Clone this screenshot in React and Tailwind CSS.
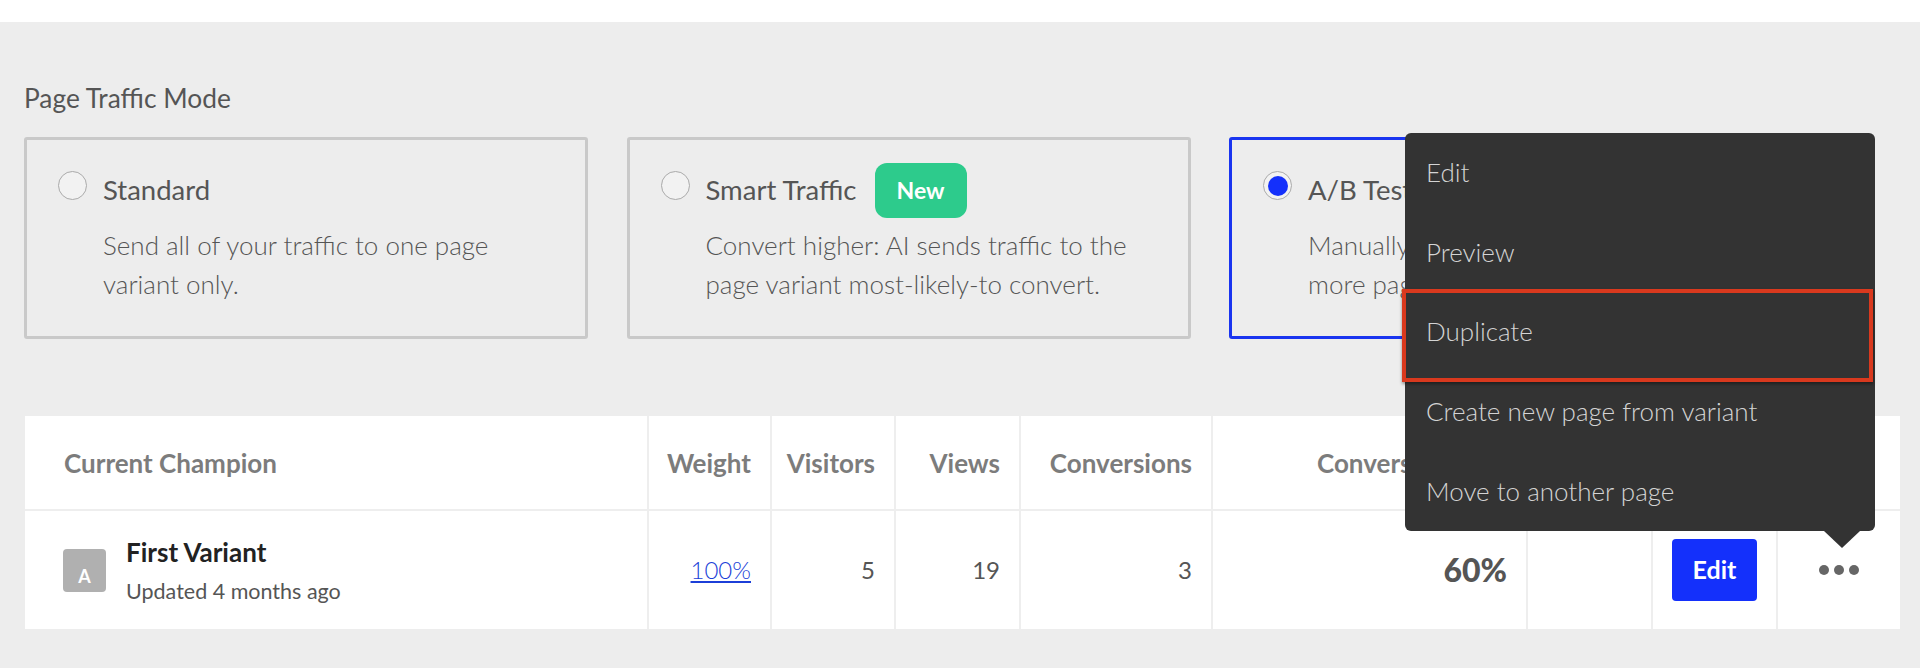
import React from 'react';

const FONT = { fontFamily: 'Lato, "Open Sans", sans-serif' };

const modes = [
  { id: 'standard', title: 'Standard', lines: ['Send all of your traffic to one page', 'variant only.'] },
  { id: 'smart', title: 'Smart Traffic', badge: 'New', lines: ['Convert higher: AI sends traffic to the', 'page variant most-likely-to convert.'] },
  { id: 'ab', title: 'A/B Test', selected: true, lines: ['Manually split traffic between two or', 'more page variants.'] },
];

const menuItems = ['Edit', 'Preview', 'Duplicate', 'Create new page from variant', 'Move to another page'];

const cols = 'grid grid-cols-[624px_123px_124px_125px_192px_315px_125px_125px_122px]';

const ModeCard = ({ mode }) => (
  <div className={`flex w-[564px] h-[202px] shrink-0 gap-[16px] rounded-[3px] border-[3px] pl-[31px] pt-[31px] ${mode.selected ? 'border-[#1a35f0]' : 'border-[#c9c9c9]'}`}>
    <span className="flex w-[29px] h-[29px] shrink-0 items-center justify-center rounded-full border-[1.5px] border-[#aaaaaa] bg-[#f2f2f2]">
      {mode.selected && <span className="block w-[20px] h-[20px] rounded-full bg-[#1430fb]" />}
    </span>
    <div>
      <div className="flex h-[38px] items-center gap-[18px] text-[27.5px] text-[#555555]">
        <span>{mode.title}</span>
        {mode.badge && (
          <span className="flex w-[92px] h-[55px] items-center justify-center rounded-[12px] bg-[#2dcb8c] text-[23px] font-bold text-white">
            {mode.badge}
          </span>
        )}
      </div>
      <p className="mt-[17px] text-[26px] leading-[39px] font-light text-[#555555]">
        {mode.lines[0]}<br />{mode.lines[1]}
      </p>
    </div>
  </div>
);

const HeadCell = ({ children, className = '' }) => (
  <div className={`flex items-center justify-end border-r-2 border-[#eeeeee] pr-[19px] pt-[2px] text-[26px] font-bold text-[#7c7c7c] ${className}`}>
    {children}
  </div>
);

const BodyCell = ({ children, className = '' }) => (
  <div className={`flex items-center justify-end border-r-2 border-[#eeeeee] pr-[19px] text-[24px] text-[#555555] ${className}`}>
    {children}
  </div>
);

export default function App() {
  return (
    <div className="relative w-[1920px] h-[668px] overflow-hidden bg-white" style={FONT}>
      <div className="h-[22px]" />
      <div className="h-[646px] bg-[#ededed] pl-[24px]">
        <h2 className="pt-[60px] h-[115px] text-[26.3px] leading-[33px] font-normal text-[#555555]">Page Traffic Mode</h2>
        <div className="flex gap-[38.5px]">
          {modes.map((m) => <ModeCard key={m.id} mode={m} />)}
        </div>

        <div className="mt-[77px] ml-[1px] w-[1875px] bg-white">
          <div className={`${cols} h-[95px] border-b-2 border-[#eeeeee]`}>
            <HeadCell className="justify-start pl-[39px]">Current Champion</HeadCell>
            <HeadCell>Weight</HeadCell>
            <HeadCell>Visitors</HeadCell>
            <HeadCell>Views</HeadCell>
            <HeadCell>Conversions</HeadCell>
            <HeadCell>Conversion Rate</HeadCell>
            <HeadCell />
            <HeadCell />
            <div />
          </div>
          <div className={`${cols} h-[118px]`}>
            <BodyCell className="justify-start gap-[20px] pl-[38px]">
              <span className="flex w-[43px] h-[43px] items-end justify-center rounded-[4px] bg-[#b0b0b0] pb-[2px] text-[18px] font-bold text-white">A</span>
              <div>
                <div className="text-[26px] leading-[32px] font-bold text-[#222222]">First Variant</div>
                <div className="mt-[9px] text-[21.5px] leading-[28px] text-[#555555]">Updated 4 months ago</div>
              </div>
            </BodyCell>
            <BodyCell><a href="#" className="font-light text-[#1c3fd8] underline">100%</a></BodyCell>
            <BodyCell>5</BodyCell>
            <BodyCell>19</BodyCell>
            <BodyCell>3</BodyCell>
            <BodyCell className="text-[32px] font-black text-[#2e2e2e]">60%</BodyCell>
            <BodyCell />
            <div className="flex items-center justify-center border-r-2 border-[#eeeeee]">
              <button className="w-[85px] h-[62px] rounded-[4px] bg-[#1430fb] text-[25px] font-bold text-white">Edit</button>
            </div>
            <div className="flex items-center justify-center gap-[5px]">
              <span className="w-[10px] h-[10px] rounded-full bg-[#666666]" />
              <span className="w-[10px] h-[10px] rounded-full bg-[#666666]" />
              <span className="w-[10px] h-[10px] rounded-full bg-[#666666]" />
            </div>
          </div>
        </div>
      </div>

      {/* popup menu over the table */}
      <div className="absolute left-[1405px] top-[133px] w-[470px] rounded-[6px] bg-[#333333]">
        {menuItems.map((item) => (
          <div key={item} className="flex h-[79.6px] items-center px-[21px] text-[26px] font-light text-[#d4d4d4]">{item}</div>
        ))}
        <div className="absolute left-[-3px] top-[156px] w-[471px] h-[93px] border-[4px] border-[#d9391e] shadow-[0_2px_3px_rgba(0,0,0,0.4)]" />
        <svg className="absolute left-[419px] top-[398px]" width="36" height="17" viewBox="0 0 36 17">
          <path d="M0 0H36L18 17Z" fill="#333333" />
        </svg>
      </div>
    </div>
  );
}
